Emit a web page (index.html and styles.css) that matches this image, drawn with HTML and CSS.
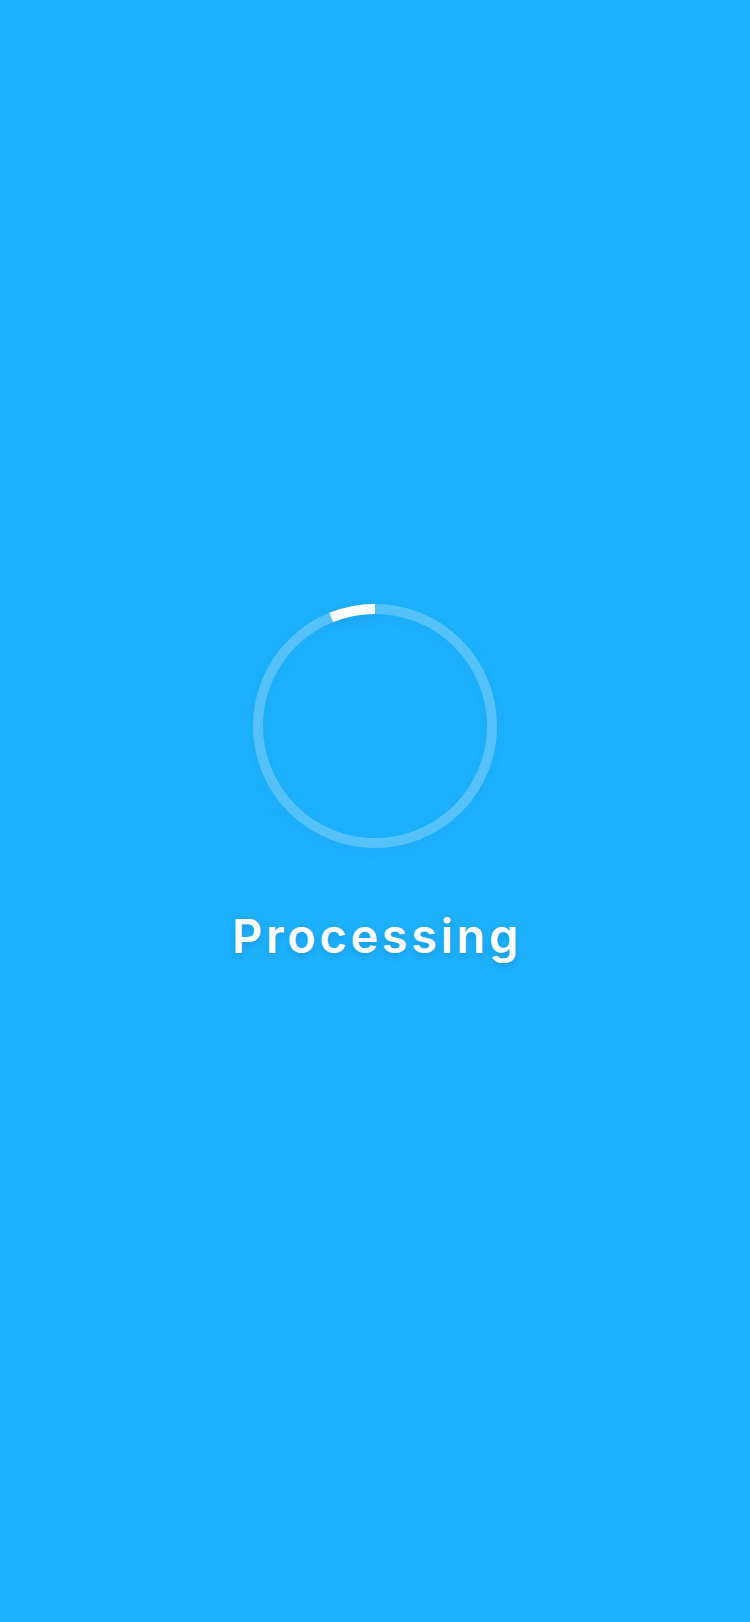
FILE: index.html
```html
<!DOCTYPE html>
<html>
<head>
<meta charset="utf-8">
<link rel="stylesheet" href="styles.css">
</head>
<body>
<main class="screen">
  <div class="spinner">
    <svg width="244" height="244" viewBox="0 0 244 244">
      <circle cx="122" cy="122" r="117" fill="none" stroke="rgba(255,255,255,0.25)" stroke-width="10"/>
      <path d="M122 5 A117 117 0 0 0 78.2 13.5" fill="none" stroke="#ffffff" stroke-width="10"/>
    </svg>
  </div>
  <h1 class="label">Processing</h1>
</main>
</body>
</html>
```
FILE: styles.css
```css
html, body {
  margin: 0;
  padding: 0;
  background: #1db0fc;
}
.screen {
  width: 750px;
  height: 1622px;
  display: flex;
  flex-direction: column;
  align-items: center;
  padding-top: 604px;
  box-sizing: border-box;
}
.spinner {
  width: 244px;
  height: 244px;
  filter: drop-shadow(0 4px 6px rgba(0, 60, 120, 0.12));
}
.spinner svg {
  display: block;
}
.label {
  margin: 60px 0 0 4px;
  font-family: "Inter", "Open Sans", sans-serif;
  font-weight: 600;
  font-size: 47px;
  line-height: 56px;
  letter-spacing: 3.6px;
  color: #ffffff;
  text-shadow: 0 3px 6px rgba(0, 60, 120, 0.18);
}
```
